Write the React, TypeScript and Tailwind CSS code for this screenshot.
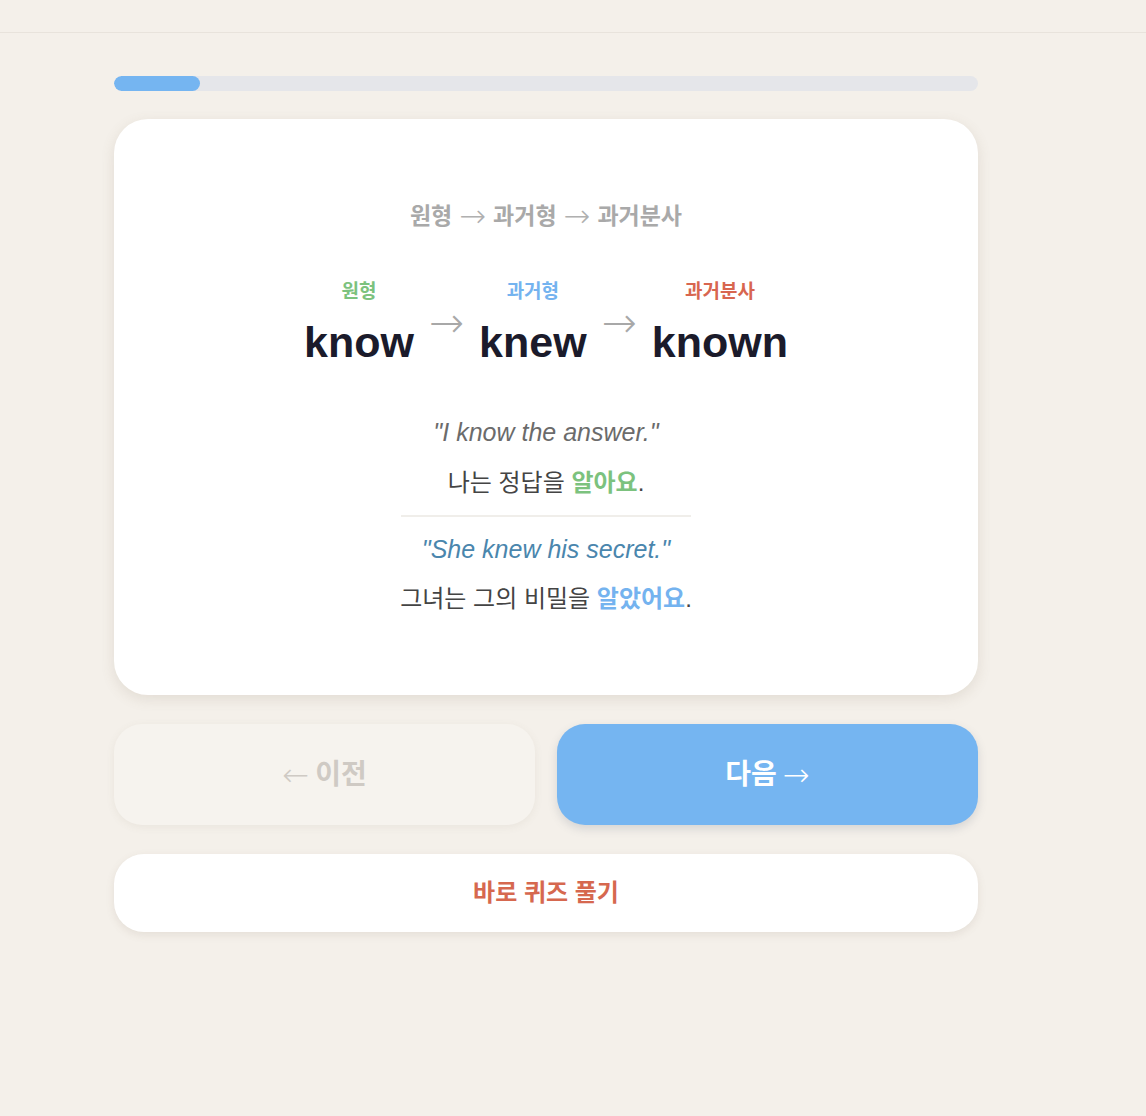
const font = "font-['Liberation_Sans','Noto_Sans_CJK_KR',sans-serif]";

const Arrow = ({ className, children }: { className?: string; children?: React.ReactNode }) => (
  <span className={`font-['DejaVu_Sans',sans-serif] font-light ${className}`}>{children ?? "→"}</span>
);

const Form = ({ label, word, color }: { label: string; word: string; color: string }) => (
  <div className="flex flex-col items-center">
    <span className={`text-[19px] font-bold leading-[26px] ${color}`}>{label}</span>
    <span className="mt-[12px] text-[43px] font-bold leading-[50px] text-[#1b1b2b]">{word}</span>
  </div>
);

export default function App() {
  const progress = 10;

  return (
    <div className={`min-h-[1116px] bg-[#f4f0ea] ${font}`}>
      <div className="h-[33px] border-b border-[#e8e3dc]" />
      <main className="ml-[114px] flex w-[864px] flex-col pt-[43px]">
        <div className="h-[15px] w-full overflow-hidden rounded-full bg-[#e5e6ea]">
          <div className="h-full rounded-full bg-[#75b5f1]" style={{ width: `${progress}%` }} />
        </div>

        <section className="mt-[28px] flex flex-col items-center rounded-[34px] bg-white pt-[82px] pb-[79px] shadow-[0_4px_14px_rgba(120,100,80,0.14)]">
          <div className="flex items-center gap-[7px] text-[23px] font-bold leading-[30px] text-[#a9a9a9]">
            <span>원형</span>
            <Arrow className="text-[32px] leading-[30px] text-[#b0b0b0]" />
            <span>과거형</span>
            <Arrow className="text-[32px] leading-[30px] text-[#b0b0b0]" />
            <span>과거분사</span>
          </div>

          <div className="mt-[48px] flex items-start">
            <Form label="원형" word="know" color="text-[#7cc27e]" />
            <Arrow className="mx-[15px] mt-[19px] text-[42px] leading-[50px] text-[#a8a8a8]" />
            <Form label="과거형" word="knew" color="text-[#74b3ef]" />
            <Arrow className="mx-[15px] mt-[19px] text-[42px] leading-[50px] text-[#a8a8a8]" />
            <Form label="과거분사" word="known" color="text-[#d8664f]" />
          </div>

          <div className="mt-[48px] flex flex-col items-center">
            <p className="text-[25px] italic leading-[34px] text-[#6b6b6b]">"I know the answer."</p>
            <p className="mt-[17px] text-[24px] leading-[34px] text-[#444]">
              나는 정답을 <span className="font-bold text-[#7cc27e]">알아요</span>.
            </p>
            <div className="mt-[15px] h-[2px] w-[290px] bg-[#f0eeea]" />
            <p className="mt-[15px] text-[25px] italic leading-[34px] text-[#4a86ad]">"She knew his secret."</p>
            <p className="mt-[16px] text-[24px] leading-[34px] text-[#444]">
              그녀는 그의 비밀을 <span className="font-bold text-[#74b3ef]">알았어요</span>.
            </p>
          </div>
        </section>

        <div className="mt-[29px] grid grid-cols-2 gap-[22px]">
          <button className="flex h-[101px] items-center justify-center gap-[6px] rounded-[28px] bg-[#f6f3ee] text-[28px] font-bold text-[#cfcac4] shadow-[0_2px_8px_rgba(120,100,80,0.08)]">
            <Arrow className="text-[32px] text-[#cfcac4]">←</Arrow>
            <span>이전</span>
          </button>
          <button className="flex h-[101px] items-center justify-center gap-[6px] rounded-[28px] bg-[#75b5f1] text-[28px] font-bold text-white shadow-[0_4px_10px_rgba(80,90,110,0.18)]">
            <span>다음</span>
            <Arrow className="text-[32px] text-white" />
          </button>
        </div>

        <button className="mt-[29px] flex h-[78px] items-center justify-center rounded-[30px] bg-white text-[24px] font-bold text-[#d6684f] shadow-[0_3px_8px_rgba(120,100,80,0.12)]">
          바로 퀴즈 풀기
        </button>
      </main>
    </div>
  );
}
